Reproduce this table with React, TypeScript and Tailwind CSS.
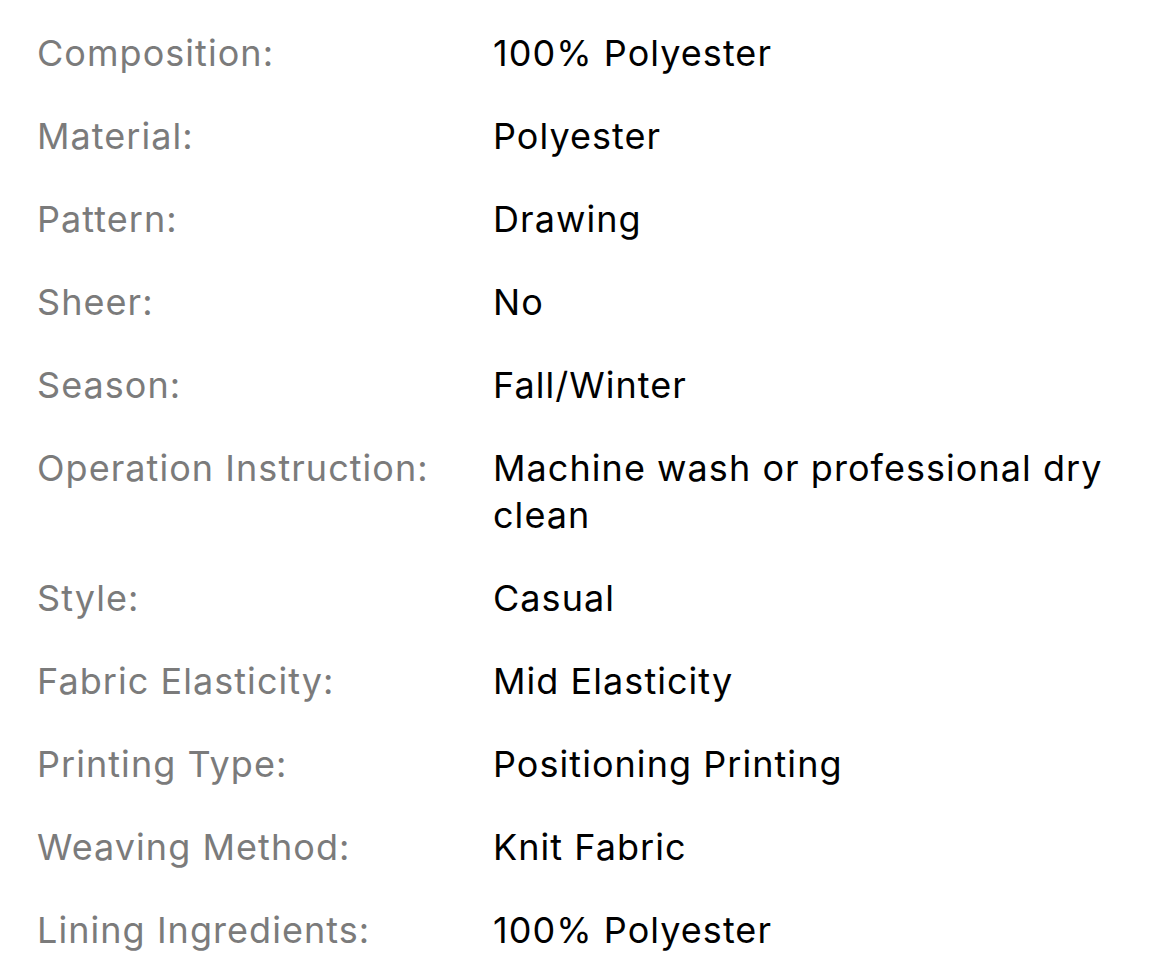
import React from 'react';

const SPECS: [string, string][] = [
  ['Composition:', '100% Polyester'],
  ['Material:', 'Polyester'],
  ['Pattern:', 'Drawing'],
  ['Sheer:', 'No'],
  ['Season:', 'Fall/Winter'],
  ['Operation Instruction:', 'Machine wash or professional dry clean'],
  ['Style:', 'Casual'],
  ['Fabric Elasticity:', 'Mid Elasticity'],
  ['Printing Type:', 'Positioning Printing'],
  ['Weaving Method:', 'Knit Fabric'],
  ['Lining Ingredients:', '100% Polyester'],
];

export default function App() {
  return (
    <div className="w-[1170px] h-[978px] bg-white overflow-hidden font-['Inter',sans-serif] text-[36px] leading-[47px] tracking-[1.05px]">
      <div className="pl-[37px] pr-[40px] pt-[30px] flex flex-col gap-[36px]">
        {SPECS.map(([label, value]) => (
          <div key={label} className="grid grid-cols-[456px_1fr]">
            <span className="text-[#7b7b7b]">{label}</span>
            <span className="text-black">{value}</span>
          </div>
        ))}
      </div>
    </div>
  );
}
